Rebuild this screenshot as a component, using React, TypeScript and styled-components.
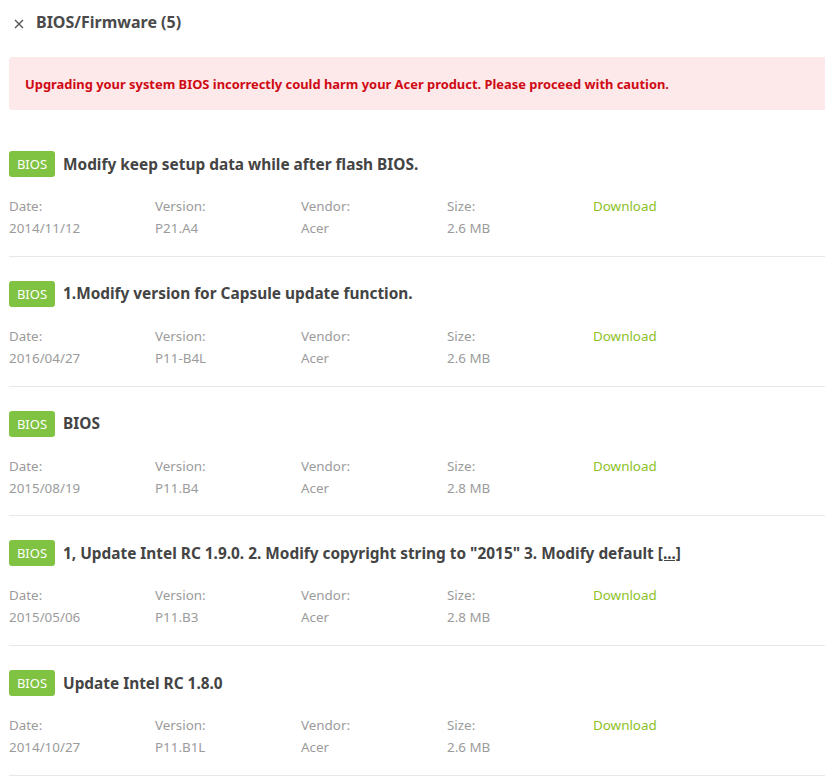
import styled, { createGlobalStyle } from 'styled-components';

const GlobalStyle = createGlobalStyle`
	body {
		margin: 0;
		background: #fff;
		font-family: 'Noto Sans', 'Open Sans', sans-serif;
	}
`;

type Firmware = {
	title: string;
	date: string;
	version: string;
	vendor: string;
	size: string;
};

const items: Firmware[] = [
	{ title: 'Modify keep setup data while after flash BIOS.', date: '2014/11/12', version: 'P21.A4', vendor: 'Acer', size: '2.6 MB' },
	{ title: '1.Modify version for Capsule update function.', date: '2016/04/27', version: 'P11-B4L', vendor: 'Acer', size: '2.6 MB' },
	{ title: 'BIOS', date: '2015/08/19', version: 'P11.B4', vendor: 'Acer', size: '2.8 MB' },
	{ title: '1, Update Intel RC 1.9.0. 2. Modify copyright string to "2015" 3. Modify default', date: '2015/05/06', version: 'P11.B3', vendor: 'Acer', size: '2.8 MB' },
	{ title: 'Update Intel RC 1.8.0', date: '2014/10/27', version: 'P11.B1L', vendor: 'Acer', size: '2.6 MB' },
];

function FirmwareRow({ item, more }: { item: Firmware; more?: boolean }) {
	return (
		<Row>
			<RowTitle>
				<Badge>BIOS</Badge>
				<h3>
					{item.title}
					{more ? <> <MoreLink>[...]</MoreLink></> : null}
				</h3>
			</RowTitle>
			<Details>
				<Field><span>Date:</span>{item.date}</Field>
				<Field><span>Version:</span>{item.version}</Field>
				<Field><span>Vendor:</span>{item.vendor}</Field>
				<Field><span>Size:</span>{item.size}</Field>
				<DownloadLink href="#">Download</DownloadLink>
			</Details>
		</Row>
	);
}

export default function App() {
	return (
		<>
			<GlobalStyle />
			<Page>
				<Header>
					<CloseIcon viewBox="0 0 10 10">
						<path d="M1 1 L9 9 M9 1 L1 9" />
					</CloseIcon>
					<h2>BIOS/Firmware (5)</h2>
				</Header>
				<Warning>
					Upgrading your system BIOS incorrectly could harm your Acer product. Please proceed with caution.
				</Warning>
				<List>
					{items.map((x, i) => <FirmwareRow key={i} item={x} more={i === 3} />)}
				</List>
			</Page>
		</>
	);
}

const Page = styled.div`
	padding: 0 0 0 9px;
	width: 816px;
	overflow: hidden;
`;

const Header = styled.div`
	display: flex;
	align-items: center;
	height: 44px;
	padding-left: 5px;

	h2 {
		margin: 0 0 0 12px;
		font-size: 16px;
		font-weight: 700;
		color: #4a4a4a;
	}
`;

const CloseIcon = styled.svg`
	width: 10px;
	height: 10px;
	margin-top: 4px;
	stroke: #555;
	stroke-width: 1.4;
	fill: none;
`;

const Warning = styled.div`
	margin-top: 13px;
	height: 53px;
	display: flex;
	align-items: center;
	padding-left: 16px;
	background: #fde8ea;
	border-radius: 3px 0 0 3px;
	color: #cf0a14;
	font-size: 12.9px;
	font-weight: 700;
`;

const List = styled.div`
	margin-top: 41px;
	display: flex;
	flex-direction: column;
`;

const Row = styled.div`
	height: 104.75px;
	border-bottom: 1px solid #e8e8e8;
	margin-bottom: 24px;
`;

const RowTitle = styled.div`
	display: flex;
	align-items: center;
	height: 26px;

	h3 {
		margin: 0 0 0 8px;
		font-size: 15.4px;
		font-weight: 700;
		color: #444;
		white-space: nowrap;
	}
`;

const Badge = styled.span`
	display: inline-flex;
	align-items: center;
	justify-content: center;
	width: 46px;
	height: 26px;
	border-radius: 3px;
	background: #80c242;
	color: #fff;
	font-size: 13px;
`;

const MoreLink = styled.span`
	text-decoration: underline;
`;

const Details = styled.div`
	display: grid;
	grid-template-columns: repeat(5, 146px);
	margin-top: 18px;
	font-size: 13.4px;
	line-height: 22px;
	color: #9b9b9b;
`;

const Field = styled.div`
	display: flex;
	flex-direction: column;
`;

const DownloadLink = styled.a`
	color: #8cc11f;
	text-decoration: none;
	align-self: start;
`;
